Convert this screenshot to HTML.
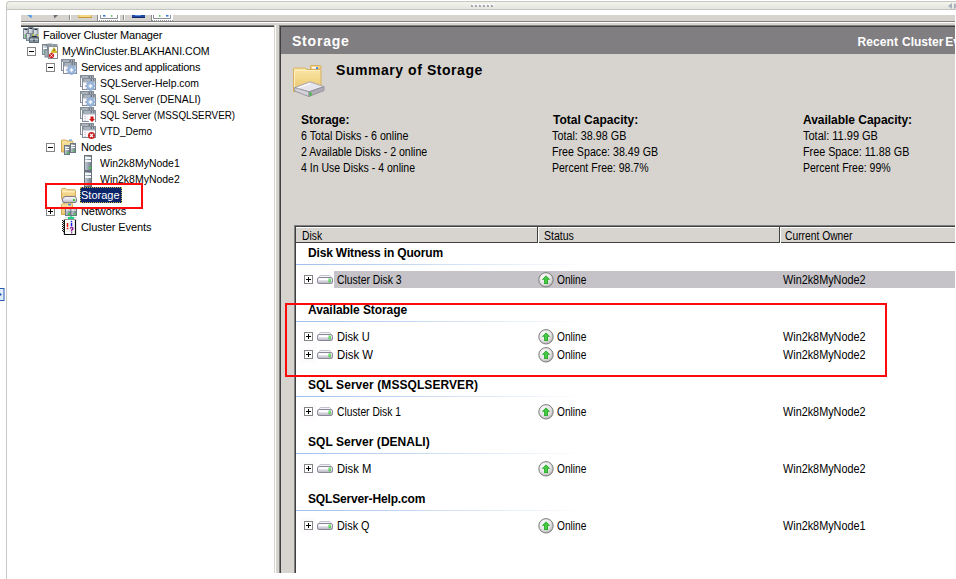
<!DOCTYPE html><html><head><meta charset="utf-8"><style>
*{margin:0;padding:0;box-sizing:border-box}
html,body{width:956px;height:579px;overflow:hidden;background:#fff;position:relative;font-family:"Liberation Sans",sans-serif;font-size:11px;color:#000}
.a{position:absolute}
.t{position:absolute;white-space:nowrap;line-height:16px;font-size:11px}
.b{font-weight:bold}
svg{position:absolute;overflow:visible}
</style></head><body>

<svg width="0" height="0" style="position:absolute">
<defs>
<linearGradient id="gDisk" x1="0" y1="0" x2="0" y2="1">
 <stop offset="0" stop-color="#fafafd"/><stop offset="0.45" stop-color="#e6e4ec"/><stop offset="1" stop-color="#b4b2bc"/>
</linearGradient>
<linearGradient id="gFold" x1="0" y1="0" x2="0" y2="1">
 <stop offset="0" stop-color="#fbe6a8"/><stop offset="1" stop-color="#e9c56c"/>
</linearGradient>
<radialGradient id="gOn" cx="0.4" cy="0.35" r="0.7">
 <stop offset="0" stop-color="#ffffff"/><stop offset="0.6" stop-color="#e4e4e4"/><stop offset="1" stop-color="#b0b0b0"/>
</radialGradient>
<linearGradient id="gSrv" x1="0" y1="0" x2="1" y2="0">
 <stop offset="0" stop-color="#c8d0d8"/><stop offset="0.5" stop-color="#9aa6b2"/><stop offset="1" stop-color="#6c7884"/>
</linearGradient>
<symbol id="plus" viewBox="0 0 9 9"><rect x="0.5" y="0.5" width="8" height="8" fill="#fff" stroke="#848484"/><path d="M2 4.5H7M4.5 2V7" stroke="#000" stroke-width="1"/></symbol>
<symbol id="minus" viewBox="0 0 9 9"><rect x="0.5" y="0.5" width="8" height="8" fill="#fff" stroke="#848484"/><path d="M2 4.5H7" stroke="#000" stroke-width="1"/></symbol>
<symbol id="disk" viewBox="0 0 16 9">
 <rect x="2.5" y="0.5" width="11" height="3" rx="1.2" fill="#f4f2f8" stroke="#c4c2cc"/>
 <rect x="0.5" y="2.5" width="15" height="6" rx="1.6" fill="url(#gDisk)" stroke="#8a8898"/>
 <rect x="2" y="3.5" width="10" height="1.5" fill="#ffffff"/>
 <rect x="11.6" y="3.6" width="2" height="3.6" fill="#28c028"/>
 <rect x="12" y="4" width="1" height="2.5" fill="#70f070"/>
</symbol>
<symbol id="online" viewBox="0 0 16 16">
 <circle cx="8" cy="7.8" r="7.2" fill="url(#gOn)" stroke="#7c7c7c"/>
 <path d="M8 3.6L12.3 7.8H10V12H6.1V7.8H3.7Z" fill="#28a828"/>
 <path d="M8 4.8L10.6 7.3H9.1V11.2H7V7.3H5.4Z" fill="#48cc48"/>
</symbol>
<symbol id="win" viewBox="0 0 16 16">
 <rect x="0.5" y="0.5" width="13" height="11" fill="#fff" stroke="#848c96"/>
 <rect x="1" y="1" width="12" height="2" fill="#6e7a88"/>
 <rect x="1.5" y="1.5" width="7" height="1" fill="#e8eef4"/>
 <rect x="10" y="1.5" width="1" height="1" fill="#e8eef4"/><rect x="12" y="1.5" width="0.8" height="1" fill="#e8eef4"/>
 <rect x="2.5" y="3.5" width="13" height="11" fill="#fff" stroke="#848c96"/>
 <rect x="3" y="4" width="12" height="2" fill="#6e7a88"/>
 <rect x="3.5" y="4.5" width="7" height="1" fill="#e8eef4"/>
 <rect x="12" y="4.5" width="1" height="1" fill="#e8eef4"/><rect x="14" y="4.5" width="0.8" height="1" fill="#e8eef4"/>
 <rect x="3" y="6" width="12" height="1.5" fill="#a4b0bc"/>
 <rect x="4" y="8" width="4" height="6" fill="#fbf4f8"/>
</symbol>
<symbol id="gear" viewBox="0 0 16 16">
 <g fill="#a6c0e0" stroke="#7c9cc8" stroke-width="0.5">
 <rect x="9.5" y="6.2" width="2" height="9.6" rx="0.3"/>
 <rect x="5.7" y="10" width="9.6" height="2" rx="0.3"/>
 <rect x="9.5" y="6.2" width="2" height="9.6" rx="0.3" transform="rotate(45 10.5 11)"/>
 <rect x="9.5" y="6.2" width="2" height="9.6" rx="0.3" transform="rotate(-45 10.5 11)"/>
 <circle cx="10.5" cy="11" r="3.4"/>
 </g>
 <path d="M10.5 8.8L11.2 10.3L12.7 11L11.2 11.7L10.5 13.2L9.8 11.7L8.3 11L9.8 10.3Z" fill="#fff"/>
</symbol>
<symbol id="server" viewBox="0 0 8 16">
 <rect x="0.5" y="0.5" width="7" height="15" fill="url(#gSrv)" stroke="#68727c"/>
 <rect x="1" y="2" width="6" height="2" fill="#f4f6f8"/>
 <rect x="1" y="5" width="6" height="2" fill="#f4f6f8"/>
 <rect x="5" y="12" width="2" height="2" fill="#44d040"/>
</symbol>
<symbol id="folder" viewBox="0 0 16 14">
 <path d="M0.5 2.5Q0.5 1.5 1.5 1.5H5L6.5 3H14.5Q15.5 3 15.5 4V12.5Q15.5 13.5 14.5 13.5H1.5Q0.5 13.5 0.5 12.5Z" fill="url(#gFold)" stroke="#c9a050"/>
 <path d="M1 5H15" stroke="#fff3cc"/>
</symbol>
</defs></svg>

<div class="a" style="left:6px;top:1px;width:960px;height:9px;background:linear-gradient(#f3f5ec,#e3e4de);border-top:1px solid #c6c6c2;border-left:1px solid #c6c6c2;border-bottom:1px solid #c4c4c0;border-top-left-radius:4px"></div>
<div class="a" style="left:6px;top:8px;width:1px;height:571px;background:#c8c8c8;"></div>
<div class="a" style="left:472px;top:4px;width:2px;height:2px;background:#fff;"></div>
<div class="a" style="left:471px;top:5px;width:2px;height:2px;background:#a4a8b0;"></div>
<div class="a" style="left:476px;top:4px;width:2px;height:2px;background:#fff;"></div>
<div class="a" style="left:475px;top:5px;width:2px;height:2px;background:#a4a8b0;"></div>
<div class="a" style="left:480px;top:4px;width:2px;height:2px;background:#fff;"></div>
<div class="a" style="left:479px;top:5px;width:2px;height:2px;background:#a4a8b0;"></div>
<div class="a" style="left:484px;top:4px;width:2px;height:2px;background:#fff;"></div>
<div class="a" style="left:483px;top:5px;width:2px;height:2px;background:#a4a8b0;"></div>
<div class="a" style="left:488px;top:4px;width:2px;height:2px;background:#fff;"></div>
<div class="a" style="left:487px;top:5px;width:2px;height:2px;background:#a4a8b0;"></div>
<div class="a" style="left:492px;top:4px;width:2px;height:2px;background:#fff;"></div>
<div class="a" style="left:491px;top:5px;width:2px;height:2px;background:#a4a8b0;"></div>
<svg style="left:948px;top:3px" width="8" height="6" viewBox="0 0 8 6"><path d="M4 0V6L0 3Z" fill="#a8b0bc"/><path d="M6 0V6L10 3Z" fill="#a8b0bc"/></svg>
<div class="a" style="left:21px;top:15px;width:934px;height:6px;background:#d7d4cf;"></div>
<div class="a" style="left:21px;top:21px;width:934px;height:1px;background:#808080;"></div>
<div class="a" style="left:21px;top:22px;width:934px;height:1px;background:#fff;"></div>
<div class="a" style="left:21px;top:23px;width:934px;height:2px;background:#d7d4cf;"></div>
<svg style="left:27px;top:15px" width="6" height="4" viewBox="0 0 6 4"><path d="M0.5 0H4.5V3.2Z" fill="#2e86e0"/><path d="M2 0H4.5V2Z" fill="#60b0f0"/></svg>
<svg style="left:53px;top:15px" width="6" height="4" viewBox="0 0 6 4"><path d="M0.5 0H5L1.5 3.5Z" fill="#6c6c74"/></svg>
<div class="a" style="left:69px;top:15px;width:1px;height:5px;background:#8c8c8c;"></div>
<div class="a" style="left:70px;top:15px;width:1px;height:5px;background:#fff;"></div>
<div class="a" style="left:78px;top:15px;width:14px;height:3px;background:#f6d888;border-bottom:1px solid #c49a3a;border-left:1px solid #d8b060;border-right:1px solid #d8b060"></div>
<div class="a" style="left:97px;top:15px;width:1px;height:6px;background:#8c8c8c;"></div>
<div class="a" style="left:98px;top:15px;width:22px;height:6px;background:#fff;"></div>
<svg style="left:98px;top:15px" width="22" height="6" viewBox="0 0 22 6"><path d="M2.5 0V3.5H19.5V0" fill="none" stroke="#8a8e96"/><path d="M1 5.5H21" stroke="#9a9a9a" stroke-dasharray="1 1"/><rect x="5" y="0" width="2.5" height="1.6" fill="#3a78d8"/><rect x="13" y="0.3" width="1.5" height="1.3" fill="#30b030"/></svg>
<div class="a" style="left:123px;top:15px;width:1px;height:5px;background:#8c8c8c;"></div>
<div class="a" style="left:124px;top:15px;width:1px;height:5px;background:#fff;"></div>
<div class="a" style="left:132px;top:15px;width:13px;height:3px;background:#2448a0;border-bottom:1px solid #142870"></div>
<div class="a" style="left:135px;top:15px;width:6px;height:1px;background:#5c8ce0;"></div>
<div class="a" style="left:151px;top:15px;width:1px;height:6px;background:#8c8c8c;"></div>
<div class="a" style="left:152px;top:15px;width:21px;height:6px;background:#fff;"></div>
<svg style="left:152px;top:15px" width="21" height="6" viewBox="0 0 21 6"><path d="M1.5 0V3.5H18.5V0" fill="none" stroke="#8a8e96"/><path d="M0 5.5H21" stroke="#9a9a9a" stroke-dasharray="1 1"/><rect x="7" y="0.3" width="1.5" height="1.3" fill="#30b030"/><rect x="14" y="0" width="2.5" height="1.6" fill="#3a78d8"/></svg>
<div class="a" style="left:21px;top:25px;width:254px;height:1px;background:#808080;"></div>
<div class="a" style="left:21px;top:26px;width:254px;height:1px;background:#404040;"></div>
<div class="a" style="left:274px;top:25px;width:1px;height:548px;background:#d7d4cf;"></div>
<div class="a" style="left:275px;top:25px;width:1px;height:548px;background:#fff;"></div>
<div class="a" style="left:276px;top:25px;width:3px;height:548px;background:#d7d4cf;"></div>
<div class="a" style="left:279px;top:25px;width:677px;height:548px;background:#d7d4cf;"></div>
<div class="a" style="left:279px;top:25px;width:1px;height:548px;background:#808080;"></div>
<div class="a" style="left:280px;top:26px;width:1px;height:547px;background:#404040;"></div>
<div class="a" style="left:279px;top:25px;width:676px;height:1px;background:#808080;"></div>
<div class="a" style="left:280px;top:26px;width:675px;height:1px;background:#404040;"></div>
<div class="a" style="left:955px;top:25px;width:1px;height:554px;background:#fff;"></div>
<div class="a" style="left:281px;top:27px;width:674px;height:27px;background:#817e82;"></div>
<div class="t" style="left:292px;top:33px;letter-spacing:0.783px;font-size:14px;font-weight:bold;color:#fff">Storage</div>
<div class="t" style="left:857.5px;top:33.5px;letter-spacing:0.100px;font-size:12px;font-weight:bold;color:#fff">Recent</div>
<div class="t" style="left:902px;top:33.5px;letter-spacing:0.000px;font-size:12px;font-weight:bold;color:#fff">Cluster</div>
<div class="t" style="left:945.3px;top:33.5px;letter-spacing:0.000px;font-size:12px;font-weight:bold;color:#fff">Events</div>
<div class="t" style="left:43px;top:27px;letter-spacing:-0.178px;font-size:11px;">Failover Cluster Manager</div>
<svg style="left:27px;top:47px" width="9" height="9" viewBox="0 0 9 9"><use href="#minus"/></svg>
<div class="t" style="left:62px;top:43px;letter-spacing:0.000px;font-size:11px;transform:scaleX(0.9586);transform-origin:0 0;">MyWinCluster.BLAKHANI.COM</div>
<svg style="left:46px;top:63px" width="9" height="9" viewBox="0 0 9 9"><use href="#minus"/></svg>
<div class="t" style="left:81px;top:59px;letter-spacing:-0.221px;font-size:11px;">Services and applications</div>
<div class="t" style="left:100px;top:75px;letter-spacing:0.000px;font-size:11px;transform:scaleX(0.9471);transform-origin:0 0;">SQLServer-Help.com</div>
<div class="t" style="left:100px;top:91px;letter-spacing:0.000px;font-size:11px;transform:scaleX(0.9402);transform-origin:0 0;">SQL Server (DENALI)</div>
<div class="t" style="left:100px;top:107px;letter-spacing:0.000px;font-size:11px;transform:scaleX(0.8947);transform-origin:0 0;">SQL Server (MSSQLSERVER)</div>
<div class="t" style="left:100px;top:123px;letter-spacing:0.000px;font-size:11px;transform:scaleX(0.9053);transform-origin:0 0;">VTD_Demo</div>
<svg style="left:46px;top:143px" width="9" height="9" viewBox="0 0 9 9"><use href="#minus"/></svg>
<div class="t" style="left:81px;top:139px;letter-spacing:-0.225px;font-size:11px;">Nodes</div>
<div class="t" style="left:100px;top:155px;letter-spacing:0.000px;font-size:11px;transform:scaleX(0.9524);transform-origin:0 0;">Win2k8MyNode1</div>
<div class="t" style="left:100px;top:171px;letter-spacing:0.000px;font-size:11px;transform:scaleX(0.9524);transform-origin:0 0;">Win2k8MyNode2</div>
<div class="a" style="left:80px;top:187px;width:42px;height:16px;background:#0a246a;outline:1px dotted #c8b040;outline-offset:-1px"></div>
<div class="t" style="left:81px;top:187px;letter-spacing:0.000px;font-size:11px;color:#fff">Storage</div>
<svg style="left:46px;top:207px" width="9" height="9" viewBox="0 0 9 9"><use href="#plus"/></svg>
<div class="t" style="left:81px;top:203px;letter-spacing:-0.086px;font-size:11px;">Networks</div>
<div class="t" style="left:81px;top:219px;letter-spacing:-0.085px;font-size:11px;">Cluster Events</div>
<svg style="left:23px;top:27px" width="16" height="16" viewBox="0 0 16 16">
<rect x="0.5" y="1.5" width="4.5" height="10" fill="url(#gSrv)" stroke="#7a8692"/>
<rect x="5.5" y="0.5" width="4.5" height="9" fill="url(#gSrv)" stroke="#7a8692"/>
<rect x="10.5" y="1.5" width="4.5" height="9" fill="url(#gSrv)" stroke="#7a8692"/>
<rect x="1.5" y="2" width="2.5" height="1" fill="#20303c"/><rect x="6.5" y="1" width="2.5" height="1" fill="#20303c"/><rect x="11.5" y="2" width="2.5" height="1" fill="#20303c"/>
<rect x="1" y="3.5" width="3.5" height="1" fill="#fff"/><rect x="1" y="5.5" width="3.5" height="1" fill="#fff"/>
<rect x="6" y="2.5" width="3.5" height="1" fill="#fff"/><rect x="6" y="4.5" width="3.5" height="1" fill="#fff"/>
<rect x="11" y="3.5" width="3.5" height="1" fill="#fff"/><rect x="11" y="5.5" width="3.5" height="1" fill="#fff"/>
<rect x="2" y="8" width="1.5" height="2" fill="#40d040"/>
<rect x="3.5" y="6.5" width="4" height="7" fill="url(#gSrv)" stroke="#7a8692"/>
<rect x="4" y="7.5" width="3" height="1" fill="#fff"/><rect x="4" y="9.5" width="3" height="1" fill="#fff"/>
<rect x="9.5" y="6.8" width="1.5" height="2" fill="#c8d840"/><rect x="14" y="7.5" width="1.3" height="1.5" fill="#c8d840"/>
<path d="M9.5 11V9.5H13.5V11" stroke="#202830" fill="none"/>
<rect x="6.5" y="10.5" width="9" height="5" fill="#8896a2" stroke="#5c6a76"/>
<rect x="7" y="12" width="8" height="1" fill="#b8c4ce"/>
<rect x="10.5" y="12.5" width="1" height="2" fill="#202830"/>
</svg>
<svg style="left:42px;top:43px" width="16" height="16" viewBox="0 0 16 16">
<rect x="0.5" y="1.5" width="5" height="10" fill="url(#gSrv)" stroke="#7a8692"/>
<rect x="1" y="3.5" width="4" height="1" fill="#fff"/><rect x="1" y="5" width="4" height="1" fill="#fff"/>
<rect x="2" y="8" width="2" height="2" fill="#40d040"/>
<rect x="3" y="7" width="4" height="7" fill="url(#gSrv)" stroke="#7a8692"/>
<rect x="6.5" y="3.5" width="9" height="12" fill="#fff" stroke="#8a8a8a"/>
<rect x="5.5" y="0.5" width="5" height="3" fill="#8e9aa6"/>
<rect x="10.5" y="1" width="5" height="2.5" fill="#8e9aa6"/>
<path d="M12 4.5L15 9.5H9Z" fill="#e8c820" stroke="#b89810" stroke-width="0.6"/>
<rect x="11.6" y="6.2" width="0.9" height="2" fill="#403000"/>
<circle cx="9.5" cy="12.5" r="2.6" fill="#d02020"/>
<path d="M8.4 11.4L10.6 13.6M10.6 11.4L8.4 13.6" stroke="#fff" stroke-width="0.9"/>
</svg>
<svg style="left:61px;top:59px" width="16" height="16" viewBox="0 0 16 16"><use href="#win"/></svg>
<svg style="left:61px;top:59px" width="16" height="16" viewBox="0 0 16 16"><use href="#gear"/></svg>
<svg style="left:80px;top:75px" width="16" height="16" viewBox="0 0 16 16"><use href="#win"/></svg>
<svg style="left:80px;top:75px" width="16" height="16" viewBox="0 0 16 16"><use href="#gear"/></svg>
<svg style="left:80px;top:91px" width="16" height="16" viewBox="0 0 16 16"><use href="#win"/></svg>
<svg style="left:80px;top:91px" width="16" height="16" viewBox="0 0 16 16"><use href="#gear"/></svg>
<svg style="left:80px;top:107px" width="16" height="16" viewBox="0 0 16 16"><use href="#win"/></svg>
<svg style="left:80px;top:107px" width="16" height="16" viewBox="0 0 16 16"><rect x="9" y="9" width="6" height="6" fill="#fff"/><path d="M10.5 9.5H13.5V12H15L12 15L9 12H10.5Z" fill="#d01818"/><path d="M5 9V15" stroke="#9ab8dc" stroke-dasharray="1 1"/></svg>
<svg style="left:80px;top:123px" width="16" height="16" viewBox="0 0 16 16"><use href="#win"/></svg>
<svg style="left:80px;top:123px" width="16" height="16" viewBox="0 0 16 16"><path d="M5 9V15" stroke="#9ab8dc" stroke-dasharray="1 1"/><circle cx="11.5" cy="12.5" r="3.5" fill="#c81c1c"/><path d="M10 11L13 14M13 11L10 14" stroke="#fff" stroke-width="1.1"/></svg>
<svg style="left:61px;top:139px" width="16" height="16" viewBox="0 0 16 16">
<path d="M0.5 2Q0.5 1 1.5 1H5L6 2H11Q12 2 12 3V13H0.5Z" fill="url(#gFold)" stroke="#d0a850"/>
<rect x="3.5" y="6.5" width="5" height="9" fill="url(#gSrv)" stroke="#6c7884"/>
<rect x="4" y="8" width="4" height="1" fill="#fff"/><rect x="4" y="10" width="4" height="1" fill="#fff"/>
<rect x="6" y="13" width="1.5" height="1.5" fill="#40d040"/>
<rect x="9.5" y="4.5" width="5" height="9" fill="url(#gSrv)" stroke="#6c7884"/>
<rect x="10" y="6" width="4" height="1" fill="#fff"/><rect x="10" y="8" width="4" height="1" fill="#fff"/>
<rect x="12" y="11" width="1.5" height="1.5" fill="#40d040"/>
<rect x="8" y="0.5" width="3" height="1.2" fill="#60a0e0"/>
</svg>
<svg style="left:84px;top:155px" width="8" height="16" viewBox="0 0 8 16"><use href="#server"/></svg>
<svg style="left:84px;top:171px" width="8" height="16" viewBox="0 0 8 16"><use href="#server"/></svg>
<svg style="left:61px;top:187px" width="16" height="16" viewBox="0 0 16 16">
<use href="#folder" x="0" y="0" width="15" height="13"/>
<path d="M4 9.5H14L15.5 11.5V14Q15.5 15.5 14 15.5H3Q1.5 15.5 1.5 14V11.5Z" fill="url(#gDisk)" stroke="#7c7a84"/>
<rect x="12" y="12" width="2" height="2" fill="#3cc83c"/>
</svg>
<svg style="left:61px;top:203px" width="16" height="16" viewBox="0 0 16 16">
<path d="M0.5 1.5Q0.5 0.8 1.5 0.8H5.5L6.5 0.2H10.5Q11.5 0.2 11.5 1.2V11.5H0.5Z" fill="url(#gFold)" stroke="#d4aa50"/>
<rect x="7" y="0.8" width="3.2" height="1.6" rx="0.8" fill="#4a8ae8"/>
<rect x="4.5" y="5.5" width="5.5" height="7" fill="url(#gSrv)" stroke="#6c7884"/>
<rect x="10" y="5.5" width="5.5" height="7" fill="url(#gSrv)" stroke="#6c7884"/>
<rect x="5" y="6.5" width="4.5" height="1" fill="#fff"/><rect x="10.5" y="6.5" width="4.5" height="1" fill="#fff"/>
<circle cx="8" cy="11" r="1.1" fill="#40d040"/><circle cx="13.8" cy="11" r="1.1" fill="#40d040"/>
<rect x="9.5" y="12.5" width="1" height="1.5" fill="#20a060"/>
<rect x="6.8" y="13.8" width="6.4" height="2.2" fill="#20d080"/>
<path d="M4 14.5H6.5M13.5 14.5H16" stroke="#d0d4dc" stroke-width="0.8"/>
</svg>
<svg style="left:61px;top:219px" width="16" height="16" viewBox="0 0 16 16">
<path d="M3 0.5H14.5V15.5H3Z" fill="#fff" stroke="#909090"/>
<path d="M14.5 1V15.5H3" fill="none" stroke="#101010" stroke-width="1.2"/>
<path d="M3.5 1V15.5" stroke="#101010"/>
<rect x="1" y="1" width="1" height="1" fill="#101010"/><rect x="3" y="1" width="1" height="1" fill="#101010"/><rect x="2" y="2" width="1" height="1" fill="#101010"/><rect x="1" y="3" width="1" height="1" fill="#101010"/><rect x="3" y="3" width="1" height="1" fill="#101010"/><rect x="2" y="4" width="1" height="1" fill="#101010"/><rect x="1" y="5" width="1" height="1" fill="#101010"/><rect x="3" y="5" width="1" height="1" fill="#101010"/><rect x="2" y="6" width="1" height="1" fill="#101010"/><rect x="1" y="7" width="1" height="1" fill="#101010"/><rect x="3" y="7" width="1" height="1" fill="#101010"/><rect x="2" y="8" width="1" height="1" fill="#101010"/><rect x="1" y="9" width="1" height="1" fill="#101010"/><rect x="3" y="9" width="1" height="1" fill="#101010"/><rect x="2" y="10" width="1" height="1" fill="#101010"/><rect x="1" y="11" width="1" height="1" fill="#101010"/><rect x="3" y="11" width="1" height="1" fill="#101010"/><rect x="2" y="12" width="1" height="1" fill="#101010"/>
<path d="M5 4H13M5 6H13M5 8H13M5 10H13M5 12H13" stroke="#d8d8d8" stroke-width="0.8"/>
<rect x="5.8" y="4" width="1.4" height="4.2" rx="0.6" fill="#f01010"/><rect x="5.8" y="9" width="1.4" height="1.2" fill="#f01010"/>
<rect x="9.8" y="1.8" width="1.4" height="1.2" fill="#1010f0"/><rect x="9.8" y="3.8" width="1.4" height="3.4" fill="#1010f0"/>
<path d="M9.2 9.6Q9.5 8.2 10.8 8.3Q12.2 8.5 11.9 9.8Q11.6 10.8 10.6 11.2V12.4" stroke="#901898" stroke-width="1.3" fill="none"/>
<rect x="10" y="13.2" width="1.3" height="1.2" fill="#901898"/>
</svg>
<div class="a" style="left:45px;top:183px;width:98px;height:26px;background:transparent;border:2px solid #ff0a0a"></div>
<svg style="left:292px;top:65px" width="34" height="32" viewBox="0 0 34 32">
<path d="M18.5 0.5H28Q29 0.5 29 1.5V4H18.5Z" fill="#f4d488" stroke="#d8b060"/>
<rect x="20" y="2" width="4" height="1.6" fill="#fff"/>
<rect x="24" y="2" width="2" height="2" fill="#4a8ae8"/>
<path d="M1.5 4Q1.5 3 2.5 3H13L15 4.5H28Q29 4.5 29 5.5V26.5H1.5Z" fill="url(#gFold)" stroke="#d8b060"/>
<path d="M2.5 5.5H28" stroke="#fff0c0"/>
<path d="M2.5 6V25" stroke="#fff0c0"/>
<path d="M2.6 22.6L18 16.8L32 21.6L17 26.8Z" fill="#e6e4ec" stroke="#9c9aa4" stroke-width="0.8"/>
<path d="M2.6 22.6L17 26.8V31.5L2.6 26Z" fill="#d4d2dc" stroke="#8c8a94" stroke-width="0.8"/>
<path d="M17 26.8L32 21.6V25.5L17 31.5Z" fill="#aeacb6" stroke="#8c8a94" stroke-width="0.8"/>
<path d="M6 23L18 18.5" stroke="#fff" stroke-width="1.2"/>
<rect x="17.5" y="27.5" width="2" height="3" fill="#30c030"/>
</svg>
<div class="t" style="left:336px;top:62px;letter-spacing:0.553px;font-size:14px;font-weight:bold;">Summary of Storage</div>
<div class="t" style="left:301px;top:112px;letter-spacing:-0.029px;font-size:12px;font-weight:bold;">Storage:</div>
<div class="t" style="left:301px;top:128px;letter-spacing:0.000px;font-size:12px;transform:scaleX(0.8917);transform-origin:0 0;">6 Total Disks - 6 online</div>
<div class="t" style="left:301px;top:144px;letter-spacing:0.000px;font-size:12px;transform:scaleX(0.8811);transform-origin:0 0;">2 Available Disks - 2 online</div>
<div class="t" style="left:301px;top:160px;letter-spacing:0.000px;font-size:12px;transform:scaleX(0.8769);transform-origin:0 0;">4 In Use Disks - 4 online</div>
<div class="t" style="left:553px;top:112px;letter-spacing:0.000px;font-size:12px;font-weight:bold;">Total Capacity:</div>
<div class="t" style="left:552px;top:128px;letter-spacing:0.000px;font-size:12px;transform:scaleX(0.8988);transform-origin:0 0;">Total: 38.98 GB</div>
<div class="t" style="left:552px;top:144px;letter-spacing:0.000px;font-size:12px;transform:scaleX(0.8881);transform-origin:0 0;">Free Space: 38.49 GB</div>
<div class="t" style="left:552px;top:160px;letter-spacing:0.000px;font-size:12px;transform:scaleX(0.8771);transform-origin:0 0;">Percent Free: 98.7%</div>
<div class="t" style="left:803px;top:112px;letter-spacing:-0.028px;font-size:12px;font-weight:bold;">Available Capacity:</div>
<div class="t" style="left:803px;top:128px;letter-spacing:0.000px;font-size:12px;transform:scaleX(0.9160);transform-origin:0 0;">Total: 11.99 GB</div>
<div class="t" style="left:803px;top:144px;letter-spacing:0.000px;font-size:12px;transform:scaleX(0.8974);transform-origin:0 0;">Free Space: 11.88 GB</div>
<div class="t" style="left:803px;top:160px;letter-spacing:0.000px;font-size:12px;transform:scaleX(0.8758);transform-origin:0 0;">Percent Free: 99%</div>
<div class="a" style="left:294px;top:225px;width:661px;height:348px;background:#fff;border-left:1px solid #808080;border-top:1px solid #808080"></div>
<div class="a" style="left:295px;top:226px;width:660px;height:1px;background:#404040;"></div>
<div class="a" style="left:295px;top:226px;width:1px;height:347px;background:#404040;"></div>
<div class="a" style="left:296px;top:227px;width:659px;height:16px;background:#d7d4cf;border-top:1px solid #fff;border-bottom:1px solid #404040"></div>
<div class="a" style="left:537px;top:227px;width:1px;height:16px;background:#404040;"></div>
<div class="a" style="left:538px;top:227px;width:1px;height:16px;background:#fff;"></div>
<div class="a" style="left:779px;top:227px;width:1px;height:16px;background:#404040;"></div>
<div class="a" style="left:780px;top:227px;width:1px;height:16px;background:#fff;"></div>
<div class="t" style="left:302px;top:228px;letter-spacing:0.000px;font-size:12px;transform:scaleX(0.8636);transform-origin:0 0;">Disk</div>
<div class="t" style="left:544px;top:228px;letter-spacing:0.000px;font-size:12px;transform:scaleX(0.8788);transform-origin:0 0;">Status</div>
<div class="t" style="left:785px;top:228px;letter-spacing:0.000px;font-size:12px;transform:scaleX(0.8570);transform-origin:0 0;">Current Owner</div>
<div class="t" style="left:308px;top:245px;letter-spacing:-0.167px;font-size:12px;font-weight:bold;">Disk Witness in Quorum</div>
<div class="a" style="left:296px;top:264px;width:290px;height:1px;background:linear-gradient(90deg,#a0c0ec,#fff);"></div>
<div class="a" style="left:334px;top:271px;width:621px;height:17px;background:#c5c3c8;"></div>
<div class="a" style="left:300px;top:272px;width:16px;height:16px;background:#fdfbfd;"></div>
<svg style="left:304px;top:275px" width="9" height="9" viewBox="0 0 9 9"><use href="#plus"/></svg>
<svg style="left:317px;top:275px" width="16" height="9" viewBox="0 0 16 9"><use href="#disk"/></svg>
<svg style="left:538px;top:272px" width="16" height="16" viewBox="0 0 16 16"><use href="#online"/></svg>
<div class="t" style="left:337px;top:272px;letter-spacing:0.000px;font-size:12px;transform:scaleX(0.8653);transform-origin:0 0;">Cluster Disk 3</div>
<div class="t" style="left:557px;top:272px;letter-spacing:0.000px;font-size:12px;transform:scaleX(0.8457);transform-origin:0 0;">Online</div>
<div class="t" style="left:783px;top:272px;letter-spacing:0.000px;font-size:12px;transform:scaleX(0.9033);transform-origin:0 0;">Win2k8MyNode2</div>
<div class="t" style="left:308px;top:302px;letter-spacing:-0.069px;font-size:12px;font-weight:bold;">Available Storage</div>
<div class="a" style="left:296px;top:321px;width:290px;height:1px;background:linear-gradient(90deg,#a0c0ec,#fff);"></div>
<div class="a" style="left:300px;top:329px;width:16px;height:16px;background:#fdfbfd;"></div>
<svg style="left:304px;top:332px" width="9" height="9" viewBox="0 0 9 9"><use href="#plus"/></svg>
<svg style="left:317px;top:332px" width="16" height="9" viewBox="0 0 16 9"><use href="#disk"/></svg>
<svg style="left:538px;top:329px" width="16" height="16" viewBox="0 0 16 16"><use href="#online"/></svg>
<div class="t" style="left:337px;top:329px;letter-spacing:0.000px;font-size:12px;transform:scaleX(0.9265);transform-origin:0 0;">Disk U</div>
<div class="t" style="left:557px;top:329px;letter-spacing:0.000px;font-size:12px;transform:scaleX(0.8457);transform-origin:0 0;">Online</div>
<div class="t" style="left:783px;top:329px;letter-spacing:0.000px;font-size:12px;transform:scaleX(0.9033);transform-origin:0 0;">Win2k8MyNode2</div>
<div class="a" style="left:300px;top:347px;width:16px;height:16px;background:#fdfbfd;"></div>
<svg style="left:304px;top:350px" width="9" height="9" viewBox="0 0 9 9"><use href="#plus"/></svg>
<svg style="left:317px;top:350px" width="16" height="9" viewBox="0 0 16 9"><use href="#disk"/></svg>
<svg style="left:538px;top:347px" width="16" height="16" viewBox="0 0 16 16"><use href="#online"/></svg>
<div class="t" style="left:337px;top:347px;letter-spacing:0.000px;font-size:12px;transform:scaleX(0.9459);transform-origin:0 0;">Disk W</div>
<div class="t" style="left:557px;top:347px;letter-spacing:0.000px;font-size:12px;transform:scaleX(0.8457);transform-origin:0 0;">Online</div>
<div class="t" style="left:783px;top:347px;letter-spacing:0.000px;font-size:12px;transform:scaleX(0.9033);transform-origin:0 0;">Win2k8MyNode2</div>
<div class="t" style="left:308px;top:377px;letter-spacing:0.070px;font-size:12px;font-weight:bold;">SQL Server (MSSQLSERVER)</div>
<div class="a" style="left:296px;top:396px;width:290px;height:1px;background:linear-gradient(90deg,#a0c0ec,#fff);"></div>
<div class="a" style="left:300px;top:404px;width:16px;height:16px;background:#fdfbfd;"></div>
<svg style="left:304px;top:407px" width="9" height="9" viewBox="0 0 9 9"><use href="#plus"/></svg>
<svg style="left:317px;top:407px" width="16" height="9" viewBox="0 0 16 9"><use href="#disk"/></svg>
<svg style="left:538px;top:404px" width="16" height="16" viewBox="0 0 16 16"><use href="#online"/></svg>
<div class="t" style="left:337px;top:404px;letter-spacing:0.000px;font-size:12px;transform:scaleX(0.8560);transform-origin:0 0;">Cluster Disk 1</div>
<div class="t" style="left:557px;top:404px;letter-spacing:0.000px;font-size:12px;transform:scaleX(0.8457);transform-origin:0 0;">Online</div>
<div class="t" style="left:783px;top:404px;letter-spacing:0.000px;font-size:12px;transform:scaleX(0.9033);transform-origin:0 0;">Win2k8MyNode2</div>
<div class="t" style="left:308px;top:434px;letter-spacing:0.033px;font-size:12px;font-weight:bold;">SQL Server (DENALI)</div>
<div class="a" style="left:296px;top:453px;width:290px;height:1px;background:linear-gradient(90deg,#a0c0ec,#fff);"></div>
<div class="a" style="left:300px;top:461px;width:16px;height:16px;background:#fdfbfd;"></div>
<svg style="left:304px;top:464px" width="9" height="9" viewBox="0 0 9 9"><use href="#plus"/></svg>
<svg style="left:317px;top:464px" width="16" height="9" viewBox="0 0 16 9"><use href="#disk"/></svg>
<svg style="left:538px;top:461px" width="16" height="16" viewBox="0 0 16 16"><use href="#online"/></svg>
<div class="t" style="left:337px;top:461px;letter-spacing:0.000px;font-size:12px;transform:scaleX(0.9343);transform-origin:0 0;">Disk M</div>
<div class="t" style="left:557px;top:461px;letter-spacing:0.000px;font-size:12px;transform:scaleX(0.8457);transform-origin:0 0;">Online</div>
<div class="t" style="left:783px;top:461px;letter-spacing:0.000px;font-size:12px;transform:scaleX(0.9033);transform-origin:0 0;">Win2k8MyNode2</div>
<div class="t" style="left:308px;top:491px;letter-spacing:-0.159px;font-size:12px;font-weight:bold;">SQLServer-Help.com</div>
<div class="a" style="left:296px;top:510px;width:290px;height:1px;background:linear-gradient(90deg,#a0c0ec,#fff);"></div>
<div class="a" style="left:300px;top:518px;width:16px;height:16px;background:#fdfbfd;"></div>
<svg style="left:304px;top:521px" width="9" height="9" viewBox="0 0 9 9"><use href="#plus"/></svg>
<svg style="left:317px;top:521px" width="16" height="9" viewBox="0 0 16 9"><use href="#disk"/></svg>
<svg style="left:538px;top:518px" width="16" height="16" viewBox="0 0 16 16"><use href="#online"/></svg>
<div class="t" style="left:337px;top:518px;letter-spacing:0.000px;font-size:12px;transform:scaleX(0.9029);transform-origin:0 0;">Disk Q</div>
<div class="t" style="left:557px;top:518px;letter-spacing:0.000px;font-size:12px;transform:scaleX(0.8457);transform-origin:0 0;">Online</div>
<div class="t" style="left:783px;top:518px;letter-spacing:0.000px;font-size:12px;transform:scaleX(0.9033);transform-origin:0 0;">Win2k8MyNode1</div>
<div class="a" style="left:285px;top:303px;width:602px;height:74px;background:transparent;border:2px solid #ff0a0a"></div>
<svg style="left:0px;top:288px" width="5" height="13" viewBox="0 0 5 13"><rect x="-3" y="0.5" width="7" height="12" fill="#e0ecfa" stroke="#2858b0"/><path d="M0 5L2 6.5L0 8Z" fill="#2858b0"/></svg>
</body></html>
